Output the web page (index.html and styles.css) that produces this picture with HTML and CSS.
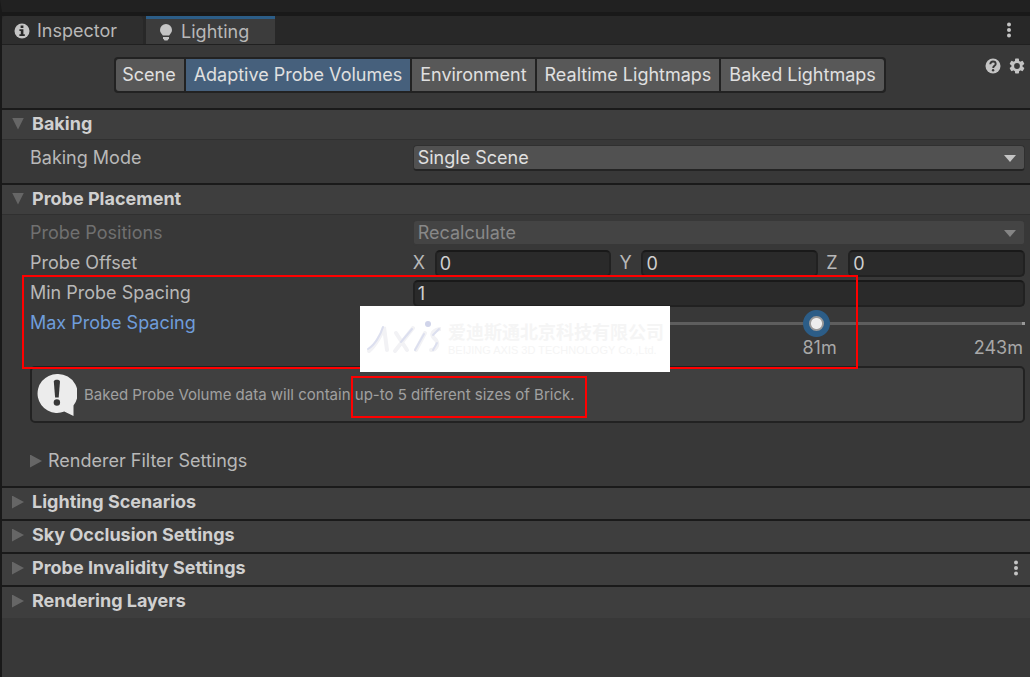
FILE: index.html
```html
<!DOCTYPE html>
<html lang="en">
<head>
    <meta charset="UTF-8">
    <meta name="viewport" content="width=device-width, initial-scale=1.0">
    <title>Lighting</title>
    <link rel="stylesheet" href="styles.css">
</head>
<body>

<div class="window">
    <header class="tab-bar">
        <button class="tab" type="button">
            <svg class="icon" viewBox="0 0 16 16" width="16" height="16">
                <circle cx="8" cy="8" r="7.5" fill="#c4c4c4"/>
                <path d="M6.6 2.6h2.8v2.4H6.6zM5.4 6.3h4v4.9h1.4v1.7H5.4v-1.7h1.4V8H5.4z" fill="#282828"/>
            </svg>
            Inspector
        </button>
        <button class="tab active" type="button">
            <svg class="icon" viewBox="0 0 16 18" width="16" height="18">
                <path d="M8 1a6 6 0 0 0-6 6c0 2.600 1.700 3.700 2.800 5.600h6.400C12.300 10.700 14 9.600 14 7a6 6 0 0 0-6-6z" fill="#c4c4c4"/>
                <path d="M5 14h6v1.200L9.500 17.500h-3L5 15.200z" fill="#c4c4c4"/>
            </svg>
            Lighting
        </button>
        <button class="icon-btn tab-menu" type="button" aria-label="Window menu">
            <svg viewBox="0 0 6 16" width="6" height="16" fill="#c4c4c4"><circle cx="3" cy="2.500" r="2"/><circle cx="3" cy="8" r="2"/><circle cx="3" cy="13.500" r="2"/></svg>
        </button>
    </header>

    <nav class="toolbar">
        <div class="modes">
            <button type="button">Scene</button>
            <button type="button" class="selected">Adaptive Probe Volumes</button>
            <button type="button">Environment</button>
            <button type="button">Realtime Lightmaps</button>
            <button type="button">Baked Lightmaps</button>
        </div>
        <div class="tools">
            <button class="icon-btn" type="button" aria-label="Help">
                <svg viewBox="0 0 16 16" width="16" height="16">
                    <circle cx="8" cy="8" r="7.500" fill="#c4c4c4"/>
                    <path d="M5.300 6.300C5.300 4.500 6.400 3.500 8 3.500s2.700 1 2.700 2.400C10.700 7.800 8.200 7.800 8.200 9.900" fill="none" stroke="#383838" stroke-width="1.900"/>
                    <circle cx="8.100" cy="12.300" r="1.200" fill="#383838"/>
                </svg>
            </button>
            <button class="icon-btn" type="button" aria-label="Settings">
                <svg viewBox="0 0 16 16" width="16" height="16">
                    <g fill="#c4c4c4">
                        <rect x="6" y="0.500" width="4" height="15" rx="0.800"/>
                        <rect x="6" y="0.500" width="4" height="15" rx="0.800" transform="rotate(60 8 8)"/>
                        <rect x="6" y="0.500" width="4" height="15" rx="0.800" transform="rotate(120 8 8)"/>
                        <circle cx="8" cy="8" r="5.600"/>
                    </g>
                    <circle cx="8" cy="8" r="2.900" fill="#383838"/>
                </svg>
            </button>
        </div>
    </nav>

    <main>
        <details class="section" open>
            <summary>Baking</summary>
            <div class="section-body">
                <div class="row">
                    <label for="bakingMode">Baking Mode</label>
                    <div class="dropdown">
                        <select id="bakingMode"><option>Single Scene</option></select>
                    </div>
                </div>
            </div>
        </details>

        <details class="section" open>
            <summary>Probe Placement</summary>
            <div class="section-body">
                <div class="row disabled">
                    <label for="probePositions">Probe Positions</label>
                    <div class="dropdown">
                        <select id="probePositions" disabled><option>Recalculate</option></select>
                    </div>
                </div>
                <div class="row">
                    <span>Probe Offset</span>
                    <div class="vector">
                        <div class="axis"><label for="offsetX">X</label><input type="text" id="offsetX" value="0"></div>
                        <div class="axis"><label for="offsetY">Y</label><input type="text" id="offsetY" value="0"></div>
                        <div class="axis"><label for="offsetZ">Z</label><input type="text" id="offsetZ" value="0"></div>
                    </div>
                </div>
                <div class="spacing-group">
                    <div class="row">
                        <label for="minSpacing">Min Probe Spacing</label>
                        <input type="text" id="minSpacing" value="1">
                    </div>
                    <div class="row focused">
                        <label for="maxSpacing">Max Probe Spacing</label>
                        <input type="range" id="maxSpacing" min="0" max="3" value="2">
                    </div>
                    <div class="row scale">
                        <div class="scale-labels"><span>81m</span><span>243m</span></div>
                    </div>
                </div>
                <div class="help-box">
                    <svg viewBox="0 0 40 43" width="40" height="43">
                        <path d="M20 1a19.500 19.500 0 1 0 7.300 37.600L36.500 43V32.500A19.500 19.500 0 0 0 20 1z" fill="#ececec"/>
                        <path d="M16.800 8.500c0-2.300 6.200-2.300 6.200 0L21.700 24.500h-3.600z" fill="#383838"/>
                        <circle cx="19.900" cy="29.500" r="3.200" fill="#383838"/>
                    </svg>
                    <p>Baked Probe Volume data will contain <span class="marked">up-to 5 different sizes of Brick.</span></p>
                </div>
                <details class="sub-section">
                    <summary>Renderer Filter Settings</summary>
                </details>
            </div>
        </details>

        <details class="section"><summary>Lighting Scenarios</summary></details>
        <details class="section"><summary>Sky Occlusion Settings</summary></details>
        <details class="section">
            <summary>Probe Invalidity Settings
                <button class="icon-btn" type="button" aria-label="More options">
                    <svg viewBox="0 0 6 16" width="6" height="16" fill="#c4c4c4"><circle cx="3" cy="2.500" r="2"/><circle cx="3" cy="8" r="2"/><circle cx="3" cy="13.500" r="2"/></svg>
                </button>
            </summary>
        </details>
        <details class="section"><summary>Rendering Layers</summary></details>
    </main>
</div>

<!-- Company watermark, floats over the centre of the window -->
<div class="watermark">
    <svg viewBox="0 0 76 36" width="76" height="36" fill="none" stroke-linecap="round">
        <g stroke="#f2f2f5" stroke-width="4">
            <path d="M4 32C10 27 17 15 19 8L22 31"/>
            <path d="M31 14L42 31M48 9L30 32"/>
            <path d="M60 14L51 31"/>
            <path d="M75 10C65 12 66 17 71 21C74 26 71 31 66 31"/>
        </g>
        <g stroke="#dcdfef" stroke-width="2">
            <path d="M3 30C10 26 16 15 18 8"/>
            <path d="M47 10L36 23"/>
            <path d="M59 15L50 31"/>
            <path d="M74 10L68 16M72 24L68 31"/>
        </g>
        <circle cx="63" cy="5" r="3" fill="#d0d4ea"/>
    </svg>
    <div class="watermark-text">
        <span class="name" lang="zh">爱迪斯通北京科技有限公司</span>
        <span class="name-en">BEIJING AXIS 3D TECHNOLOGY Co.,Ltd.</span>
    </div>
</div>

</body>
</html>
```
FILE: styles.css
```css
* {
    box-sizing: border-box;
}
body {
    margin: 0;
    min-height: 100vh;
    background-color: #383838;
    color: #b8b8b8;
    font-family: Inter, sans-serif;
    font-size: 18px;
    line-height: 24px;
}
button, input, select {
    font: inherit;
    color: inherit;
}
button {
    border: none;
    background: none;
    padding: 0;
    white-space: nowrap;
}
svg {
    display: block;
    flex: none;
}
.window {
    min-height: 100vh;
    border-top: 12px solid #212121;
    border-left: 2px solid #191919;
}

/* Tabs */
.tab-bar {
    display: flex;
    gap: 3px;
    height: 33px;
    padding-top: 4px;
    background-color: #282828;
    border-bottom: 1px solid #202020;
    box-shadow: inset 0 4px #191919;
}
.tab {
    display: flex;
    align-items: center;
    gap: 7px;
    padding: 2px 26px 0 12px;
    background-color: #2e2e2e;
    border-radius: 4px 4px 0 0;
}
.tab.active {
    background-color: #3c3c3c;
    border-top: 3px solid #2c5d87;
    border-radius: 0;
    padding-top: 0;
}
.icon-btn {
    display: flex;
    align-items: center;
}
.tab-menu {
    margin-left: auto;
    margin-right: 18px;
}

/* Mode buttons */
.toolbar {
    display: grid;
    grid-template-columns: 1fr auto;
    padding: 12px 5px 15px 13px;
}
.modes {
    justify-self: center;
    display: flex;
    gap: 2px;
    padding: 2px;
    background-color: #222;
    border-radius: 4px;
}
.modes button {
    height: 32px;
    padding: 0 8px;
    background-color: #585858;
    color: #e0e0e0;
}
.modes button:first-child {
    padding-left: 6px;
    border-radius: 3px 0 0 3px;
}
.modes button:last-child {
    border-radius: 0 3px 3px 0;
}
.modes .selected {
    background-color: #46607c;
}
.tools {
    display: flex;
    align-items: flex-start;
    gap: 8px;
    padding-top: 1px;
}

/* Foldout sections */
.section {
    border-top: 2px solid #1a1a1a;
}
summary {
    display: flex;
    align-items: center;
    list-style: none;
}
summary::before {
    content: "";
    width: 12px;
    height: 13px;
    background-color: #666;
    clip-path: polygon(0 0, 100% 50%, 0 100%);
}
.section > summary {
    gap: 8px;
    height: 31px;
    padding: 0 11px 3px 10px;
    background-color: #3e3e3e;
    color: #d0d0d0;
    font-weight: 700;
}
.section[open] > summary {
    height: 30px;
    border-bottom: 1px solid #303030;
    padding-bottom: 2px;
}
.section[open] > summary::before {
    height: 12px;
    clip-path: polygon(0 0, 100% 0, 50% 100%);
}
summary .icon-btn {
    margin-left: auto;
}
.section-body {
    padding: 3px 5px 10px 28px;
}
.row {
    display: grid;
    grid-template-columns: 5fr 8fr;
    align-items: center;
    height: 30px;
}
.row.disabled {
    color: #707070;
}
.row.focused {
    color: #6f9ddb;
}

/* Fields */
.dropdown {
    position: relative;
}
.dropdown::after {
    content: "";
    position: absolute;
    top: 10px;
    right: 9px;
    width: 12px;
    height: 7px;
    background-color: #c4c4c4;
    clip-path: polygon(0 0, 100% 0, 50% 100%);
}
.disabled .dropdown::after {
    background-color: #858585;
}
select {
    display: block;
    width: 100%;
    height: 26px;
    padding: 0 4px;
    appearance: none;
    background-color: #515151;
    border: 1px solid #303030;
    border-bottom: 2px solid #242424;
    border-radius: 4px;
    color: #e0e0e0;
}
select:disabled {
    background-color: #444;
    border-color: #383838;
    color: #888;
    opacity: 1;
}
input[type="text"] {
    width: 100%;
    min-width: 0;
    height: 27px;
    padding: 0 3px;
    background-color: #2a2a2a;
    border: 2px solid #212121;
    border-top-color: #191919;
    border-radius: 5px;
    color: #d0d0d0;
}
.vector {
    display: grid;
    grid-template-columns: repeat(3, 1fr);
    gap: 8px;
}
.axis {
    display: grid;
    grid-template-columns: 14px 1fr;
    gap: 8px;
    align-items: center;
}
input[type="range"] {
    width: 100%;
    height: 28px;
    margin: 0;
    appearance: none;
    background: linear-gradient(#999, #999) right center / 3px 3px no-repeat,
        linear-gradient(#5e5e5e, #5e5e5e) center / 100% 3px no-repeat;
}
input[type="range"]::-webkit-slider-thumb {
    appearance: none;
    width: 27px;
    height: 27px;
    border: 6px solid #2c5d87;
    border-radius: 50%;
    background: radial-gradient(circle, #eee 5px, #999 6px);
}
.scale {
    height: 18px;
    color: #a8a8a8;
}
.scale-labels {
    grid-column: 2;
    display: grid;
    grid-template-columns: 2fr 1fr;
    padding-right: 2px;
    line-height: 20px;
    text-align: right;
}
.scale-labels span:first-child {
    justify-self: end;
    transform: translateX(50%);
}

/* Red frames around the values being explained */
.spacing-group {
    position: relative;
}
.spacing-group::after {
    content: "";
    position: absolute;
    top: -3px;
    bottom: -13px;
    left: -8px;
    right: 167px;
    border: 2px solid #f00;
    pointer-events: none;
}
.marked {
    position: relative;
}
.marked::after {
    content: "";
    position: absolute;
    inset: -9px -12px -14px -4px;
    border: 2px solid #f00;
}

.help-box {
    display: flex;
    align-items: center;
    gap: 7px;
    height: 57px;
    margin: 10px 0 23px;
    padding: 0 5px;
    background-color: #404040;
    border: 2px solid #222;
    border-radius: 5px;
    color: #a0a0a0;
    font-size: 15px;
}
.help-box p {
    margin: 0;
}
.sub-section summary {
    gap: 6px;
    height: 30px;
}

.watermark {
    position: fixed;
    top: 50%;
    left: 50%;
    transform: translate(-50%, -50%);
    display: flex;
    align-items: center;
    gap: 7px;
    width: 310px;
    height: 66px;
    padding: 0 5px 4px;
    background-color: #fff;
    color: #f5f5f5;
    white-space: nowrap;
}
.watermark-text {
    display: flex;
    flex-direction: column;
}
.watermark .name {
    font-family: "Noto Sans CJK SC", sans-serif;
    font-size: 18px;
    line-height: 26px;
    font-weight: bold;
}
.watermark .name-en {
    font-family: "Liberation Sans", sans-serif;
    font-size: 11px;
    line-height: 12px;
}
```
